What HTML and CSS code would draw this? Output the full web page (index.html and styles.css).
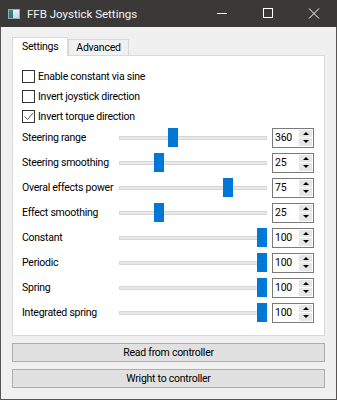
FILE: index.html
```html
<!DOCTYPE html>
<html lang="en">
<head>
  <meta charset="UTF-8" />
  <title>FFB Joystick Settings</title>
  <link rel="stylesheet" href="styles.css">
</head>
<body>
  <div class="window">
    <div class="titlebar">
      <span class="app-icon"><span class="app-icon-side"></span></span>
      <span class="title">FFB Joystick Settings</span>
      <span class="controls">
        <svg class="ctl" width="46" height="27" viewBox="0 0 46 27"><path d="M18 13.5h10" stroke="#fff" stroke-width="1"/></svg>
        <svg class="ctl" width="46" height="27" viewBox="0 0 46 27"><rect x="18.5" y="8.5" width="9" height="9" fill="none" stroke="#fff" stroke-width="1"/></svg>
        <svg class="ctl" width="46" height="27" viewBox="0 0 46 27"><path d="M18 8.5l10 10M28 8.5l-10 10" stroke="#fff" stroke-width="1"/></svg>
      </span>
    </div>

    <div class="content">
      <div class="tabs">
        <div class="tab active">Settings</div>
        <div class="tab">Advanced</div>
      </div>

      <div class="panel">
        <label class="check"><span class="box"></span>Enable constant via sine</label>
        <label class="check"><span class="box"></span>Invert joystick direction</label>
        <label class="check"><span class="box checked"><svg width="11" height="11" viewBox="0 0 11 11"><path d="M1.5 5.5l3 3 5.5-6.5" fill="none" stroke="#555" stroke-width="1"/></svg></span>Invert torque direction</label>

        <div class="rows" id="rows"></div>
      </div>

      <button class="btn">Read from controller</button>
      <button class="btn">Wright to controller</button>
    </div>
  </div>

  <script>
    const ajustes = [
      { nome: "Steering range", valor: 360, pos: 0.355 },
      { nome: "Steering smoothing", valor: 25, pos: 0.25 },
      { nome: "Overal effects power", valor: 75, pos: 0.75 },
      { nome: "Effect smoothing", valor: 25, pos: 0.25 },
      { nome: "Constant", valor: 100, pos: 1 },
      { nome: "Periodic", valor: 100, pos: 1 },
      { nome: "Spring", valor: 100, pos: 1 },
      { nome: "Integrated spring", valor: 100, pos: 1 }
    ];

    const rows = document.getElementById('rows');
    ajustes.forEach(a => {
      const div = document.createElement('div');
      div.className = 'row';
      div.innerHTML = `
        <span class="label">${a.nome}</span>
        <span class="slider">
          <span class="groove"></span>
          <span class="handle" style="left: calc((100% - 10px) * ${a.pos})"></span>
        </span>
        <span class="spin">
          <span class="spin-value">${a.valor}</span>
          <span class="spin-btns">
            <span class="arrow up"></span>
            <span class="arrow down"></span>
          </span>
        </span>
      `;
      rows.appendChild(div);
    });
  </script>
</body>
</html>
```

FILE: styles.css
```css
* {
  box-sizing: border-box;
}

body {
  margin: 0;
  font-family: Roboto, "Noto Sans", Arial, sans-serif;
  font-size: 10.5px;
  letter-spacing: -0.25px;
  color: #000;
  background: #f0f0f0;
}

.window {
  width: 337px;
  height: 400px;
  border: 1px solid #575553;
  border-top: none;
  background: #f0f0f0;
}

/* Barra de título */
.titlebar {
  height: 27px;
  background: #3b3937;
  display: flex;
  align-items: center;
  margin: 0 -1px;
}

.app-icon {
  width: 12px;
  height: 10px;
  margin: 0 7px 0 8px;
  background: linear-gradient(#e8f0f4, #c7d7e2);
  border: 1px solid #9aa8b2;
  display: flex;
}

.app-icon-side {
  width: 4px;
  background: linear-gradient(#3a8f7a, #2c6e8e);
}

.title {
  color: #f2f2f2;
  font-size: 11.5px;
  letter-spacing: 0;
  flex: 1;
}

.controls {
  display: flex;
}

.ctl {
  display: block;
}

.content {
  padding: 10px 11px 0 11px;
}

/* Abas */
.tabs {
  display: flex;
  align-items: flex-end;
  height: 18px;
}

.tab {
  height: 16px;
  padding: 0 7px;
  background: #f0f0f0;
  border: 1px solid #d9d9d9;
  border-bottom: none;
  line-height: 15px;
}

.tab.active {
  height: 19px;
  background: #fff;
  padding: 0 9px;
  margin-bottom: -1px;
  position: relative;
  z-index: 1;
  line-height: 17px;
}

.panel {
  background: #fff;
  border: 1px solid #d9d9d9;
  padding: 10px 9px 10px 9px;
}

.check {
  display: flex;
  align-items: center;
  height: 20px;
  white-space: nowrap;
}

.box {
  width: 13px;
  height: 13px;
  border: 1px solid #333;
  background: #fff;
  margin-right: 3px;
  display: flex;
  align-items: center;
  justify-content: center;
}

.box.checked svg {
  display: block;
}

.rows {
  margin-top: -1px;
}

.row {
  display: grid;
  grid-template-columns: 97px 148px 42px;
  align-items: center;
  height: 25px;
}

.label {
  white-space: nowrap;
}

.slider {
  position: relative;
  height: 19px;
  display: flex;
  align-items: center;
}

.groove {
  width: 100%;
  height: 4px;
  background: #e7eaea;
  border: 1px solid #d6d6d6;
}

.handle {
  position: absolute;
  top: 0;
  width: 10px;
  height: 19px;
  background: #0078d7;
}

.spin {
  height: 20px;
  margin-left: 5px;
  width: 42px;
  border: 1px solid #7a7a7a;
  display: flex;
  background: #fff;
}

.spin-value {
  flex: 1;
  padding-left: 2px;
  line-height: 18px;
}

.spin-btns {
  width: 14px;
  display: flex;
  flex-direction: column;
  padding: 1px 1px 1px 0;
}

.arrow {
  flex: 1;
  background: #e6e6e6;
  display: flex;
  align-items: center;
  justify-content: center;
}

.arrow.up {
  margin-bottom: 1px;
}

.arrow::after {
  content: "";
  border-left: 3px solid transparent;
  border-right: 3px solid transparent;
}

.arrow.up::after {
  border-bottom: 3px solid #000;
}

.arrow.down::after {
  border-top: 3px solid #000;
}

/* Botões */
.btn {
  display: block;
  width: 100%;
  height: 19px;
  margin-top: 7px;
  background: #e1e1e1;
  border: 1px solid #adadad;
  font-family: inherit;
  font-size: 10.5px;
  letter-spacing: -0.25px;
  color: #000;
  padding: 0;
}

.btn + .btn {
  margin-top: 7px;
}
```
